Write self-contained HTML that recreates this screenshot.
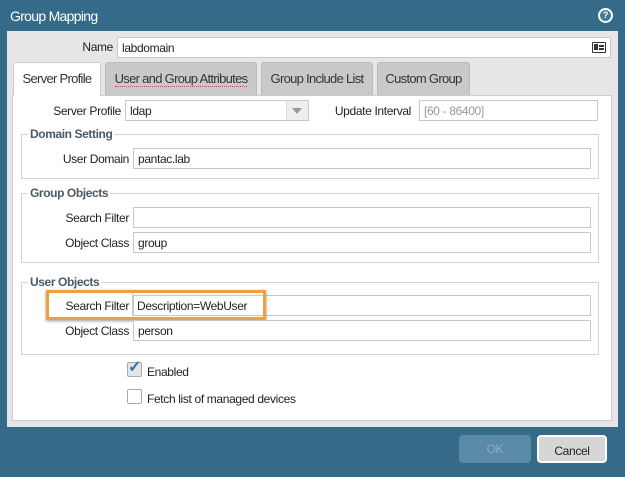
<!DOCTYPE html>
<html><head><style>
*{box-sizing:border-box;margin:0;padding:0}
body{width:625px;height:477px;background:#356a89;font-family:"Liberation Sans",sans-serif;font-size:12px;letter-spacing:-0.35px;color:#222;position:relative;overflow:hidden}
.a{position:absolute;white-space:nowrap}
.title{left:10px;top:8px;color:#fff;font-size:14px;letter-spacing:-0.7px}
.panel{left:7px;top:31px;width:611px;height:396px;background:#e6e6e6}
.body{left:12px;top:95px;width:600px;height:326px;background:#fff;border:1px solid #ccc}
.inp{background:#fff;border:1px solid #c8c8c8;height:21px;padding:3px 4px;font-size:12px}
.lbl{text-align:right;font-size:12px}
.tab{top:62px;height:33px;background:#c9c9c9;border:1px solid #bbb;border-bottom:none;border-radius:3px 3px 0 0;text-align:center;padding-top:8px;font-size:13px;letter-spacing:-0.7px;color:#333}
.fs{border:1px solid #d5d5d5}
.lg{font-weight:bold;color:#4a5a66;background:#fff;padding:0 2px;font-size:12px;letter-spacing:-0.4px}
.cb{width:15px;height:15px;border:1px solid #aaa;border-radius:2px;background:#fff}
.btn{top:435px;height:28px;border-radius:4px;text-align:center;padding-top:7px;font-size:12px}
</style></head><body>
<div class="a title">Group Mapping</div>
<div class="a" style="left:598px;top:8px;width:15px;height:15px;border-radius:50%;background:#fff;"><div class="a" style="left:2px;top:2px;width:11px;height:11px;border-radius:50%;background:#3d7aa0;color:#fff;font-size:9px;font-weight:bold;text-align:center;line-height:11px">?</div></div>
<div class="a panel"></div>
<div class="a lbl" style="left:40px;top:40px;width:73px">Name</div>
<div class="a inp" style="left:117px;top:37px;width:494px">labdomain</div>
<div class="a" style="left:592px;top:42px;width:14px;height:11px;border:1.5px solid #333;border-radius:1px"><div class="a" style="left:1px;top:1px;width:4px;height:6px;background:#333"></div><div class="a" style="left:6px;top:2px;width:5px;height:1.5px;background:#333"></div><div class="a" style="left:6px;top:5px;width:5px;height:1.5px;background:#333"></div></div>
<div class="a body"></div>
<div class="a tab" style="left:13px;width:88px;background:#fff;border-color:#ccc;height:34px">Server Profile</div>
<div class="a tab" style="left:105px;width:152px"><span style="border-bottom:1px dotted #d44">User and Group Attributes</span></div>
<div class="a tab" style="left:261px;width:112px">Group Include List</div>
<div class="a tab" style="left:377px;width:93px">Custom Group</div>

<div class="a lbl" style="left:30px;top:104px;width:91px">Server Profile</div>
<div class="a inp" style="left:125px;top:100px;width:184px">ldap</div>
<div class="a" style="left:286px;top:101px;width:22px;height:19px;background:#eee;border-left:1px solid #ddd"></div>
<div class="a" style="left:292px;top:108px;width:0;height:0;border-left:5px solid transparent;border-right:5px solid transparent;border-top:6px solid #999"></div>
<div class="a lbl" style="left:320px;top:104px;width:91px">Update Interval</div>
<div class="a inp" style="left:419px;top:100px;width:179px;color:#999">[60 - 86400]</div>

<div class="a fs" style="left:21px;top:134px;width:578px;height:45px"></div>
<div class="a lg" style="left:28px;top:127px">Domain Setting</div>
<div class="a lbl" style="left:30px;top:152px;width:99px">User Domain</div>
<div class="a inp" style="left:133px;top:148px;width:458px">pantac.lab</div>

<div class="a fs" style="left:21px;top:193px;width:578px;height:70px"></div>
<div class="a lg" style="left:28px;top:186px">Group Objects</div>
<div class="a lbl" style="left:30px;top:211px;width:99px">Search Filter</div>
<div class="a inp" style="left:133px;top:207px;width:458px"></div>
<div class="a lbl" style="left:30px;top:236px;width:99px">Object Class</div>
<div class="a inp" style="left:133px;top:232px;width:458px">group</div>

<div class="a fs" style="left:21px;top:282px;width:578px;height:73px"></div>
<div class="a lg" style="left:28px;top:275px">User Objects</div>
<div class="a inp" style="left:133px;top:295px;width:458px"></div>
<div class="a" style="left:46px;top:290px;width:220px;height:30px;border:3px solid #f0a040;box-shadow:0 1px 3px rgba(0,0,0,.4)"></div>
<div class="a lbl" style="left:30px;top:299px;width:99px">Search Filter</div>
<div class="a" style="left:132px;top:293px;width:1px;height:23px;background:#ccc"></div>
<div class="a" style="left:137px;top:299px">Description=WebUser</div>
<div class="a lbl" style="left:30px;top:324px;width:99px">Object Class</div>
<div class="a inp" style="left:133px;top:320px;width:458px">person</div>

<div class="a cb" style="left:127px;top:362px;background:#dde6ee"></div>
<div class="a" style="left:128px;top:357px;color:#3d6f95;font-size:16px;font-weight:bold">✓</div>
<div class="a" style="left:147px;top:365px">Enabled</div>
<div class="a cb" style="left:127px;top:389px"></div>
<div class="a" style="left:147px;top:392px">Fetch list of managed devices</div>

<div class="a btn" style="left:459px;width:72px;background:#5b8aa6;color:#8fb0c4">OK</div>
<div class="a btn" style="left:537px;width:70px;background:#d6d6d6;border:2px solid #fff;color:#222">Cancel</div>
</body></html>
